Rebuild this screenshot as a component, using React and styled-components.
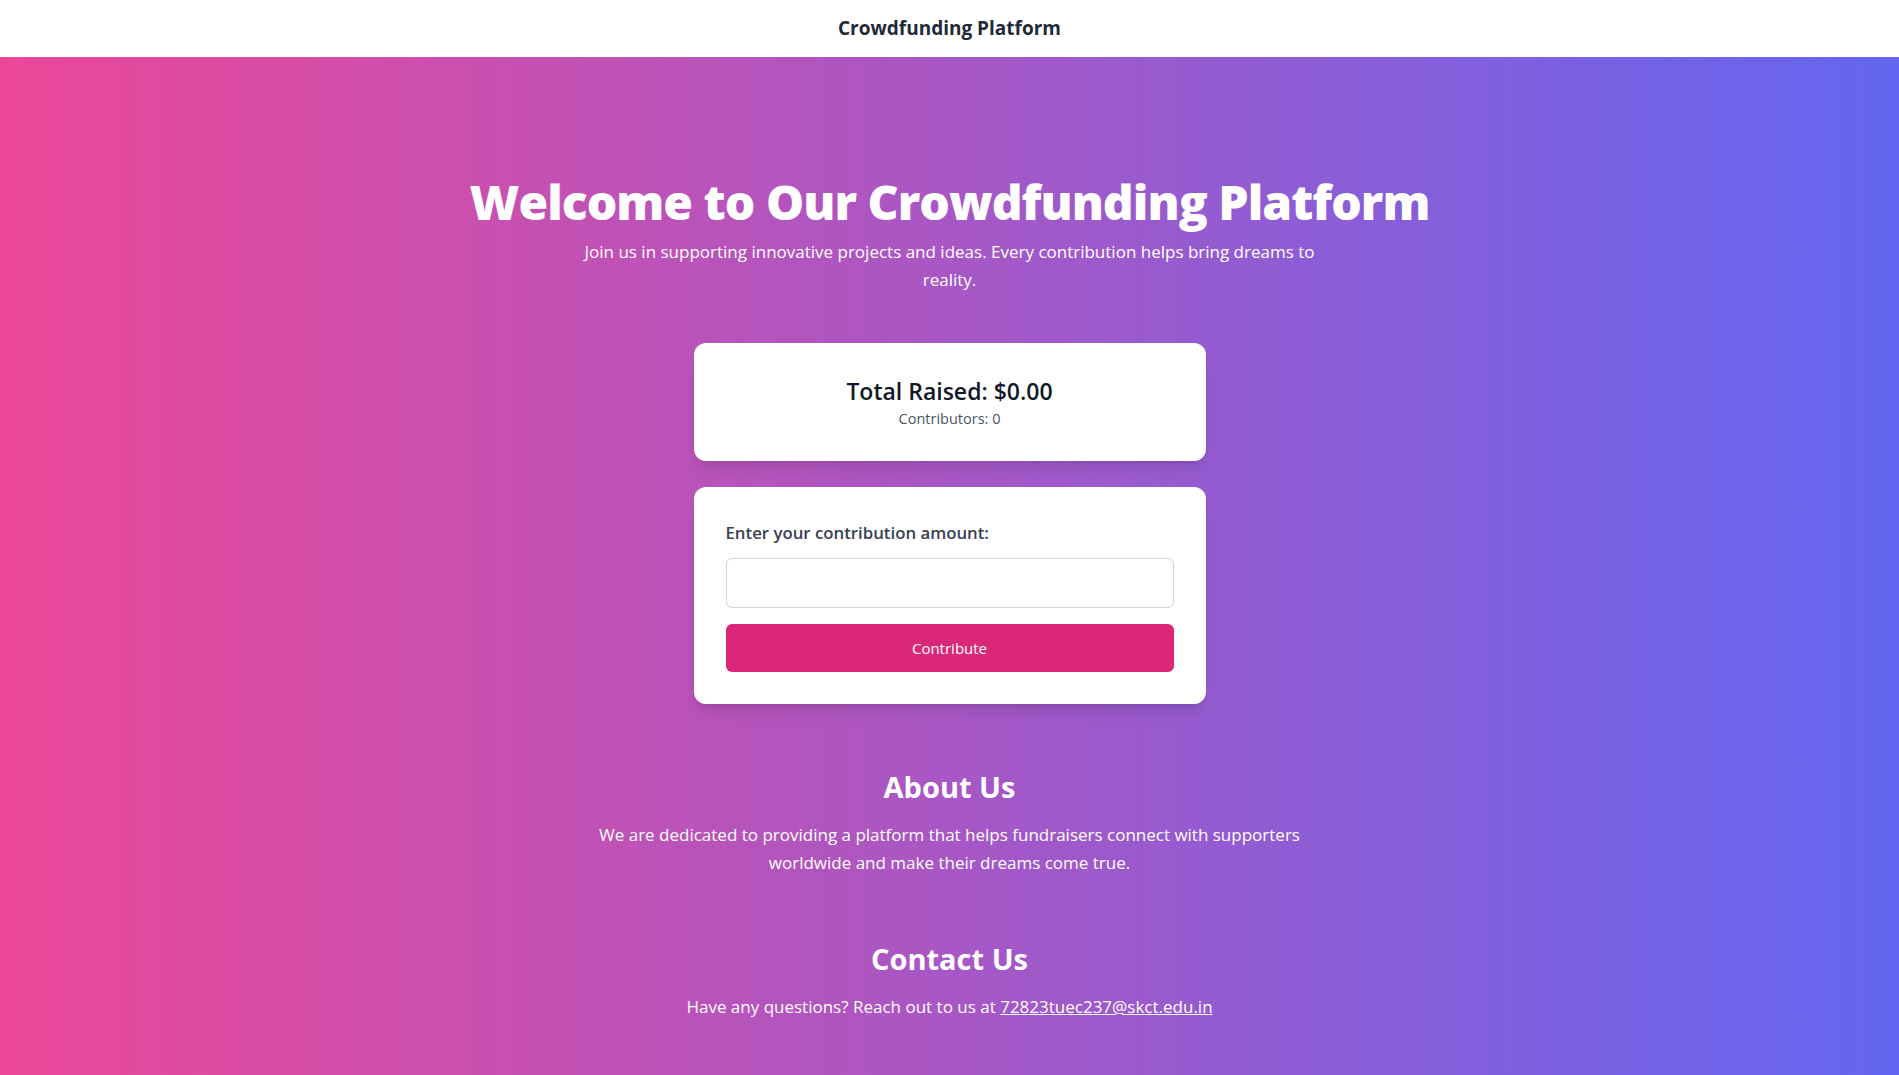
import React from 'react';
import styled, { createGlobalStyle } from 'styled-components';

const GlobalStyle = createGlobalStyle`
    * {
        box-sizing: border-box;
    }
    html, body {
        margin: 0;
        padding: 0;
    }
    body {
        font-family: 'Open Sans', 'Noto Sans', sans-serif;
        -webkit-font-smoothing: antialiased;
    }
`;

const Navbar = styled.header`
    height: 57px;
    background: #fff;
    display: flex;
    align-items: center;
    justify-content: center;
    box-shadow: 0 1px 2px rgba(0, 0, 0, 0.05);
`;

const Brand = styled.h1`
    margin: 0 0 2px;
    font-size: 19px;
    font-weight: 700;
    color: #1f2937;
`;

const Main = styled.main`
    min-height: calc(100vh - 57px);
    background: linear-gradient(to right, #ec4899, #6366f1);
    color: #fff;
    display: flex;
    flex-direction: column;
    align-items: center;
    padding: 121px 24px 55px;
    text-align: center;
`;

const Title = styled.h2`
    margin: 0 0 12px;
    font-size: 48px;
    line-height: 48px;
    font-weight: 800;
    letter-spacing: -0.95px;
`;

const Lead = styled.p`
    margin: 0;
    max-width: 768px;
    font-size: 17px;
    line-height: 28px;
`;

const Card = styled.section`
    width: 512px;
    background: #fff;
    border-radius: 12px;
    box-shadow: 0 10px 15px -3px rgba(0, 0, 0, 0.1), 0 4px 6px -4px rgba(0, 0, 0, 0.1);
    padding: 32px;
    margin-top: ${props => props.$top}px;
    text-align: ${props => props.$align || 'center'};
`;

const Total = styled.h3`
    margin: 0 0 2px;
    font-size: 23px;
    line-height: 32px;
    font-weight: 600;
    color: #111827;
`;

const Contributors = styled.p`
    margin: 0;
    font-size: 14.5px;
    line-height: 20px;
    color: #4b5563;
`;

const Label = styled.label`
    display: block;
    margin: 2px 0 13px;
    font-size: 16.8px;
    line-height: 24px;
    font-weight: 600;
    color: #374151;
`;

const AmountInput = styled.input`
    display: block;
    width: 100%;
    height: 50px;
    border: 1px solid #d1d5db;
    border-radius: 6px;
    padding: 12px 16px;
    font-size: 16px;
    font-family: inherit;
    margin-bottom: 16px;
    outline: none;
`;

const ContributeButton = styled.button`
    display: block;
    width: 100%;
    height: 48px;
    border: none;
    border-radius: 6px;
    background: #db2777;
    color: #fff;
    font-family: inherit;
    font-size: 15px;
    cursor: pointer;
`;

const Section = styled.section`
    margin-top: ${props => props.$top}px;
    display: flex;
    flex-direction: column;
    align-items: center;
`;

const SectionTitle = styled.h2`
    margin: 0 0 16px;
    font-size: 29px;
    line-height: 36px;
    font-weight: 700;
`;

const Email = styled.a`
    color: #fff;
    text-decoration: underline;
`;

export default function App() {
    return (
        <>
            <GlobalStyle />
            <Navbar>
                <Brand>Crowdfunding Platform</Brand>
            </Navbar>
            <Main>
                <Title>Welcome to Our Crowdfunding Platform</Title>
                <Lead>
                    Join us in supporting innovative projects and ideas. Every contribution helps bring dreams to reality.
                </Lead>
                <Card $top={49}>
                    <Total>Total Raised: $0.00</Total>
                    <Contributors>Contributors: 0</Contributors>
                </Card>
                <Card $top={26} $align="left">
                    <Label htmlFor="amount">Enter your contribution amount:</Label>
                    <AmountInput id="amount" type="number" />
                    <ContributeButton>Contribute</ContributeButton>
                </Card>
                <Section $top={65}>
                    <SectionTitle>About Us</SectionTitle>
                    <Lead>
                        We are dedicated to providing a platform that helps fundraisers connect with supporters worldwide and make their dreams come true.
                    </Lead>
                </Section>
                <Section $top={64}>
                    <SectionTitle>Contact Us</SectionTitle>
                    <Lead>
                        Have any questions? Reach out to us at <Email href="mailto:72823tuec237@skct.edu.in">72823tuec237@skct.edu.in</Email>
                    </Lead>
                </Section>
            </Main>
        </>
    );
}
